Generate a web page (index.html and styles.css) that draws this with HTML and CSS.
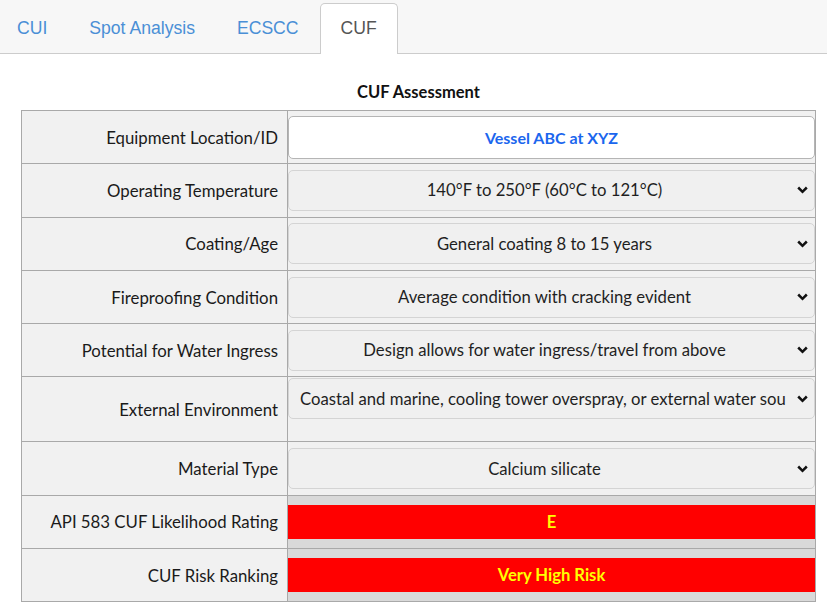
FILE: index.html
```html
<!DOCTYPE html>
<html lang="en">
<head>
<meta charset="utf-8">
<title>CUF Assessment</title>
<link rel="stylesheet" href="styles.css">
</head>
<body>
<nav class="tabs">
  <a class="tab first" href="#">CUI</a>
  <a class="tab" href="#">Spot Analysis</a>
  <a class="tab" href="#">ECSCC</a>
  <a class="tab active" href="#">CUF</a>
</nav>
<main class="content">
  <h1 class="title">CUF Assessment</h1>
  <table class="form-table">
    <tr>
      <th class="label">Equipment Location/ID</th>
      <td class="field"><input class="text-input" type="text" value="Vessel ABC at XYZ"></td>
    </tr>
    <tr>
      <th class="label">Operating Temperature</th>
      <td class="field"><div class="select-wrap"><select class="select"><option>140°F to 250°F (60°C to 121°C)</option></select><svg class="chev" width="11" height="8" viewBox="0 0 11 8"><path d="M1.2 1.5 L5.5 5.8 L9.8 1.5" fill="none" stroke="#111" stroke-width="2.5"/></svg></div></td>
    </tr>
    <tr>
      <th class="label">Coating/Age</th>
      <td class="field"><div class="select-wrap"><select class="select"><option>General coating 8 to 15 years</option></select><svg class="chev" width="11" height="8" viewBox="0 0 11 8"><path d="M1.2 1.5 L5.5 5.8 L9.8 1.5" fill="none" stroke="#111" stroke-width="2.5"/></svg></div></td>
    </tr>
    <tr>
      <th class="label">Fireproofing Condition</th>
      <td class="field"><div class="select-wrap"><select class="select"><option>Average condition with cracking evident</option></select><svg class="chev" width="11" height="8" viewBox="0 0 11 8"><path d="M1.2 1.5 L5.5 5.8 L9.8 1.5" fill="none" stroke="#111" stroke-width="2.5"/></svg></div></td>
    </tr>
    <tr>
      <th class="label">Potential for Water Ingress</th>
      <td class="field"><div class="select-wrap"><select class="select"><option>Design allows for water ingress/travel from above</option></select><svg class="chev" width="11" height="8" viewBox="0 0 11 8"><path d="M1.2 1.5 L5.5 5.8 L9.8 1.5" fill="none" stroke="#111" stroke-width="2.5"/></svg></div></td>
    </tr>
    <tr class="tall">
      <th class="label">External Environment</th>
      <td class="field top"><div class="select-wrap"><select class="select long"><option>Coastal and marine, cooling tower overspray, or external water source</option></select><svg class="chev" width="11" height="8" viewBox="0 0 11 8"><path d="M1.2 1.5 L5.5 5.8 L9.8 1.5" fill="none" stroke="#111" stroke-width="2.5"/></svg></div></td>
    </tr>
    <tr>
      <th class="label">Material Type</th>
      <td class="field"><div class="select-wrap"><select class="select"><option>Calcium silicate</option></select><svg class="chev" width="11" height="8" viewBox="0 0 11 8"><path d="M1.2 1.5 L5.5 5.8 L9.8 1.5" fill="none" stroke="#111" stroke-width="2.5"/></svg></div></td>
    </tr>
    <tr>
      <th class="label">API 583 CUF Likelihood Rating</th>
      <td class="field result-cell"><div class="result">E</div></td>
    </tr>
    <tr>
      <th class="label">CUF Risk Ranking</th>
      <td class="field result-cell"><div class="result">Very High Risk</div></td>
    </tr>
  </table>
</main>
</body>
</html>
```

FILE: styles.css
```css
html, body {
  margin: 0;
  padding: 0;
  background: #ffffff;
}

body {
  font-family: Lato, "Open Sans", sans-serif;
  color: #1a1a1a;
}

.tabs {
  display: flex;
  background: #f7f7f7;
  border-bottom: 1px solid #cccccc;
  padding-top: 3px;
  height: 50px;
  box-sizing: content-box;
}

.tab {
  display: block;
  font-family: "Liberation Sans", Arial, sans-serif;
  font-size: 17.6px;
  line-height: 48px;
  padding: 0 20px 2px;
  color: #4a8fd6;
  text-decoration: none;
  border: 1px solid transparent;
  border-bottom: none;
  border-radius: 5px 5px 0 0;
  height: 50px;
  box-sizing: border-box;
}

.tab.first {
  margin-left: -4px;
}

.tab.active {
  background: #ffffff;
  color: #555555;
  border-color: #cccccc;
  height: 51px;
}

.content {
  padding: 28px 0 0 21px;
}

.title {
  margin: 0 0 8px;
  width: 795px;
  text-align: center;
  font-size: 16.5px;
  line-height: 20px;
  font-weight: 700;
  color: #111111;
}

.form-table {
  border-collapse: collapse;
  width: 795px;
  table-layout: fixed;
}

.form-table tr {
  height: 53.3px;
}

.form-table tr.tall {
  height: 65px;
}

.label {
  width: 256px;
  background: #f1f1f1;
  border: 1px solid #a9a9a9;
  text-align: right;
  font-weight: 400;
  font-size: 16.8px;
  color: #1a1a1a;
  padding: 0 9px 0 0;
  vertical-align: middle;
}

.field {
  background: #f1f1f1;
  border: 1px solid #a9a9a9;
  padding: 0;
  vertical-align: middle;
}

.field.top {
  vertical-align: top;
  padding-top: 1px;
}

.text-input {
  display: block;
  box-sizing: border-box;
  width: 100%;
  height: 43px;
  margin: 0;
  border: 1px solid #b5b5b5;
  border-radius: 5px;
  background: #ffffff;
  text-align: center;
  font-family: Lato, "Open Sans", sans-serif;
  font-size: 16px;
  font-weight: 700;
  color: #1b66ee;
  outline: none;
}

.select-wrap {
  position: relative;
}

.select {
  display: block;
  box-sizing: border-box;
  width: 100%;
  height: 41px;
  margin: 0;
  -webkit-appearance: none;
  appearance: none;
  background: #f0f0f0;
  border: 1px solid #d4d4d4;
  border-radius: 5px;
  font-family: Lato, "Open Sans", sans-serif;
  font-size: 16.7px;
  color: #1f1f1f;
  text-align: center;
  text-align-last: center;
  padding: 0 24px 0 10px;
  outline: none;
}

.select.long {
  text-align: left;
  text-align-last: left;
  padding: 0 28px 0 11px;
}

.chev {
  position: absolute;
  right: 7px;
  top: 50%;
  margin-top: -4px;
  pointer-events: none;
}

.result-cell {
  background: #d9d9d9;
}

.result {
  background: #ff0000;
  color: #ffff00;
  font-weight: 700;
  font-size: 16.6px;
  height: 34px;
  line-height: 34px;
  text-align: center;
}
```
